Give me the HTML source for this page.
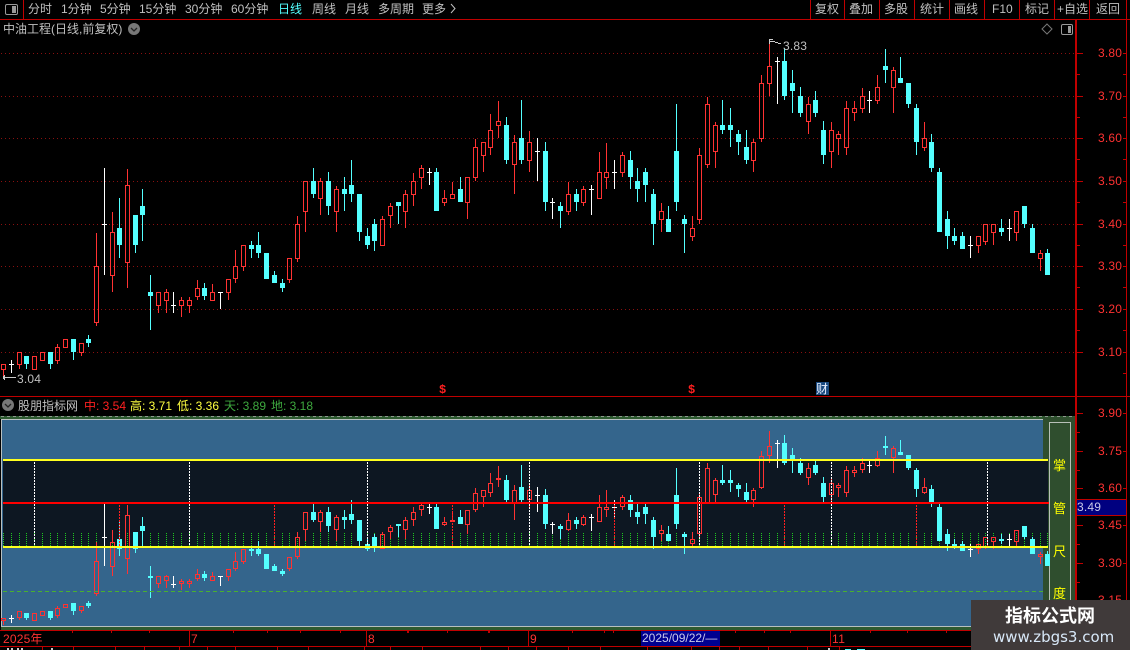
<!DOCTYPE html>
<html><head><meta charset="utf-8">
<style>
html,body{margin:0;padding:0;background:#000;width:1130px;height:650px;overflow:hidden}
#r{position:relative;width:1130px;height:650px;overflow:hidden;background:#000;font-family:"Liberation Sans","WenQuanYi Zen Hei","Noto Sans CJK SC",sans-serif;font-size:12px;color:#c0c0c0}
#r div{position:absolute;white-space:nowrap;line-height:14px;height:14px}
svg{position:absolute;left:0;top:0}
.a{color:#ff3232;font-size:12px;letter-spacing:.2px;left:1098px}
.y{color:#ffff00;font-size:13px;left:1053px}
</style></head><body><div id="r">
<svg id="s" width="1130" height="650" shape-rendering="crispEdges"></svg>

<div style="left:28px;top:2px">分时</div>
<div style="left:61px;top:2px">1分钟</div>
<div style="left:100px;top:2px">5分钟</div>
<div style="left:139px;top:2px">15分钟</div>
<div style="left:185px;top:2px">30分钟</div>
<div style="left:231px;top:2px">60分钟</div>
<div style="left:278px;top:2px;color:#54ffff">日线</div>
<div style="left:312px;top:2px">周线</div>
<div style="left:345px;top:2px">月线</div>
<div style="left:378px;top:2px">多周期</div>
<div style="left:422px;top:2px">更多</div>
<div style="left:815px;top:2px">复权</div>
<div style="left:849px;top:2px">叠加</div>
<div style="left:884px;top:2px">多股</div>
<div style="left:920px;top:2px">统计</div>
<div style="left:954px;top:2px">画线</div>
<div style="left:992px;top:2px">F10</div>
<div style="left:1025px;top:2px">标记</div>
<div style="left:1057px;top:2px">+自选</div>
<div style="left:1096px;top:2px">返回</div>
<div style="left:3px;top:22px">中油工程(日线,前复权)</div>

<div class="a" style="top:46px">3.80</div>
<div class="a" style="top:89px">3.70</div>
<div class="a" style="top:131px">3.60</div>
<div class="a" style="top:174px">3.50</div>
<div class="a" style="top:217px">3.40</div>
<div class="a" style="top:259px">3.30</div>
<div class="a" style="top:302px">3.20</div>
<div class="a" style="top:345px">3.10</div>
<div class="a" style="top:406px">3.90</div>
<div class="a" style="top:444px">3.75</div>
<div class="a" style="top:481px">3.60</div>
<div class="a" style="top:518px">3.45</div>
<div class="a" style="top:556px">3.30</div>
<div class="a" style="top:593px">3.15</div>
<div style="left:1077px;top:500px;color:#c8c8e8;letter-spacing:.2px">3.49</div>

<div style="left:783px;top:39px;letter-spacing:.2px">3.83</div>
<div style="left:17px;top:372px;letter-spacing:.2px">3.04</div>

<div style="left:439px;top:383px;color:#ff2020;font-family:'Liberation Mono',monospace;font-weight:bold;font-size:12px">$</div>
<div style="left:688px;top:383px;color:#ff2020;font-family:'Liberation Mono',monospace;font-weight:bold;font-size:12px">$</div>
<div style="left:816px;top:382px;color:#e8f0ff;font-size:12px">财</div>

<div style="left:18px;top:399px">股朋指标网</div>
<div style="left:84px;top:399px;color:#ff2020">中: 3.54</div>
<div style="left:130px;top:399px;color:#ffff40">高: 3.71</div>
<div style="left:177px;top:399px;color:#ffff40">低: 3.36</div>
<div style="left:224px;top:399px;color:#3ea83e">天: 3.89</div>
<div style="left:271px;top:399px;color:#3ea83e">地: 3.18</div>

<div class="y" style="top:459px">掌</div>
<div class="y" style="top:502px">管</div>
<div class="y" style="top:545px">尺</div>
<div class="y" style="top:587px">度</div>

<div style="left:3px;top:632px;color:#ff3232;letter-spacing:.2px">2025年</div>
<div style="left:191px;top:632px;color:#ff3232">7</div>
<div style="left:368px;top:632px;color:#ff3232">8</div>
<div style="left:530px;top:632px;color:#ff3232">9</div>
<div style="left:832px;top:632px;color:#ff3232;letter-spacing:.5px">11</div>
<div style="left:641px;top:631px;width:79px;height:15px;background:#000090;color:#c8c8e8;text-align:left;padding-left:1px;box-sizing:border-box">2025/09/22/—</div>

<div style="left:971px;top:600px;width:159px;height:50px;background:#403a3a"></div>
<div style="left:1005px;top:605px;height:20px;line-height:20px;font-family:'Noto Sans CJK SC',sans-serif;font-weight:bold;font-size:18px;color:#fff">指标公式网</div>
<div style="left:993px;top:628px;height:18px;line-height:18px;font-family:'DejaVu Sans',sans-serif;font-size:15px;color:#d8e8f8;letter-spacing:0">www.zbgs3.com</div>
</div>
<script>
var D=[[150,[
[0,643,643,659,680],[2,630,643,643,668],[0,607,607,644,656],[1,618,618,642,656],[0,619,619,659,659],[0,607,607,632,632],[1,606,606,642,656],[0,583,592,632,641],[0,568,568,593,593],[1,567,567,606,629],[0,580,580,608,617],[1,555,567,579,590],[0,250,349,518,527],[2,54,223,223,375],[0,186,247,377,425],[1,144,234,285,323],[0,57,106,338,413],[1,195,195,285,308],[1,117,168,194,272],[1,375,426,438,539],[0,427,427,467,488],[0,418,427,452,488],[2,426,466,466,488],[0,442,451,467,500],[0,442,451,467,488],[0,390,415,440,449],[1,399,414,438,449],[0,402,427,452,452],[2,427,427,427,476],[0,388,388,428,449],[0,300,349,388,398],[0,286,286,350,362],[1,273,285,297,323],[1,246,285,309,323],[1,309,309,387,387],[1,363,375,399,399],[1,387,399,414,425],[0,325,325,389,398],[0,198,223,326,335]]],
[90,[
[0,273,273,365,425],[1,234,273,312,323],[0,264,273,326,375],[1,246,273,348,375],[0,288,297,365,425],[1,261,297,312,362],[1,210,285,312,335],[1,312,312,426,453],[1,414,438,465,477],[1,387,402,453,483],[0,378,388,467,467],[0,339,349,377,413],[1,336,336,348,402],[0,300,313,365,413],[0,249,274,314,347],[0,225,235,263,296],[2,234,246,246,285],[1,234,246,363,363],[0,300,325,338,347],[0,276,313,326,326],[1,261,297,336,336],[0,262,262,338,387],[0,147,172,263,273],[0,157,157,197,245],[0,72,121,173,194],[0,33,94,107,144],[1,81,105,210,221],[0,135,157,224,312],[1,30,144,210,221],[0,123,157,212,245],[2,144,184,184,273],[1,156,183,336,362],[2,324,337,337,387],[1,336,348,363,413],[0,276,313,365,374],[1,297,312,336,362]]],
[30,[
[0,468,478,518,527],[2,465,478,478,554],[0,366,427,506,506],[0,339,427,443,477],[2,390,427,427,477],[0,366,376,428,440],[1,363,390,441,477],[1,414,453,477,516],[1,414,426,465,516],[1,477,492,582,645],[0,519,544,569,606],[1,528,567,606,606],[1,222,363,516,543],[1,555,567,582,669],[0,558,595,620,632],[0,354,376,569,582],[0,201,223,404,413],[0,276,286,365,413],[1,210,285,300,312],[1,234,285,300,351],[1,300,312,336,375],[1,300,351,390,402],[0,327,337,392,425],[0,135,160,326,335],[0,30,109,161,198],[2,81,94,94,222],[1,54,93,198,210],[1,120,159,183,249],[1,171,198,249,261],[0,201,223,275,312],[1,183,210,249,261],[1,273,300,375,402],[0,276,301,365,413],[0,303,313,326,375],[0,213,235,353,375],[0,213,235,250,273],
[0,174,199,236,249],[2,183,211,211,249],[0,135,172,212,221],[1,57,108,120,159],[0,111,121,173,249],[1,81,144,159,159],[1,159,159,222,234],[1,222,234,336,375],[0,276,325,353,362],[1,312,336,414,426],[1,414,426,606,606],[1,543,567,618,657],[1,594,618,633,645],[1,606,618,657,657],[2,618,646,646,684],[0,619,619,647,669],[0,583,583,635,645],[0,583,583,608,645],[1,567,594,606,618],[2,567,595,595,633],[0,544,544,608,633],[1,528,528,582,594],[1,582,594,669,669],[0,660,670,686,723],[1,657,669,735,735]]]];
var C=[];D.forEach(function(g){g[1].forEach(function(c){C.push([c[0],g[0]+c[1]/3,g[0]+c[2]/3,g[0]+c[3]/3,g[0]+c[4]/3])})});
var o=[];
function R(x,y,w,h,f){o.push('<rect x="'+x+'" y="'+y+'" width="'+w+'" height="'+h+'" fill="'+f+'"/>')}
function DV(x,a,b,f,on,off){for(var y=a;y<b;y+=on+off)R(x,y,1,on,f)}
function DH(y,a,b,f,on,off,h){for(var x=a;x<b;x+=on+off)R(x,y,on,h||1,f)}
var RED='#c00000',CR='#ff3232',CC='#54ffff';
/* header */
R(0,19,1130,1,RED);R(23,0,1,19,RED);
[810,844,879,914,949,984,1019,1054,1089,1126].forEach(function(x){R(x,0,1,19,RED)});
R(1075,20,2,630,RED);R(1126,20,1,630,RED);
R(0,396,1130,1,RED);
/* grid */
[53,96,138,181,224,266,309,352].forEach(function(y){DH(y,1,1075,'#8a1010',1,3)});
/* axis ticks upper */
for(var i=0;i<8;i++){var yy=[53,96,138,181,224,266,309,352][i];R(1077,yy,6,1,RED);if(i<7)R(1077,yy+21,3,1,RED);R(1123,yy,3,1,RED);R(1123,yy+21,3,1,RED)}
/* lower panel */
R(0,416,1075,1,'#2e5a30');DH(416,1,1075,'#909890',3,3);
R(0,417,1075,2,'#2e5a30');
R(1043,417,32,213,'#2f4e2e');
R(1,419,1042,1,'#b8c0c0');
R(1,419,1,208,'#b8c0c0');
R(2,420,1041,206,'#34658c');
R(1,626,1042,1,'#b8c0c0');
R(1,627,1074,3,'#2e5a30');
R(3,461,1045,86,'#0d1722');
/* inner scale box */
o.push('<rect x="1049.5" y="422.5" width="21" height="210" fill="none" stroke="#b8c0b8"/>');
/* lower axis ticks */
[413,451,488,525,563,600].forEach(function(y){R(1077,y,6,1,RED);R(1077,y+19,3,1,RED);R(1123,y,3,1,RED)});
/* green dots */
function X(i){return Math.round(3.3+7.733*i)}
var wc=[34,189,367,529,699,831,987],rc=[119,274,452,614,784,916];
for(i=0;i<C.length;i++){var x=X(i);DV(x,533,546,'#20c820',1,1)}
/* candles */
function cand(c,x,f){var t=c[0],h=Math.round(f(c[1])),a=Math.round(f(c[2])),b=Math.round(f(c[3])),l=Math.round(f(c[4]));
 if(t==2){R(x,h,1,Math.max(l-h,1),'#fff');R(x-2,a,5,1,'#fff');return}
 if(t==1){R(x,h,1,Math.max(l-h,1),CC);R(x-2,a,5,Math.max(b-a,1),CC);return}
 if(a>h)R(x,h,1,a-h,CR);if(l>b)R(x,b,1,l-b,CR);
 o.push('<rect x="'+(x-1.5)+'" y="'+(a+.5)+'" width="4" height="'+Math.max(b-a-1,1)+'" fill="none" stroke="'+CR+'"/>');
}
function U(y){return y}function L(y){return 438.2+(y-53.3)*.578}
C.forEach(function(c,i){cand(c,X(i),U)});
C.forEach(function(c,i){cand(c,X(i),L)});
/* dotted columns */
wc.forEach(function(x){DV(x,462,547,'#fff',2,1)});
rc.forEach(function(x){DV(x,505,546,'#ff2020',2,1)});
/* level lines */
R(3,459,1045,2,'#ffff20');R(3,502,1046,2,'#ff0000');R(3,546,1045,2,'#ffff20');
DH(591,3,1043,'#49b030',4,3);
/* time axis */
R(0,630,1075,1,RED);R(0,646,1130,1,RED);
[189,366,528,830].forEach(function(x){R(x,631,1,15,RED)});
[72,111,149,233,267,300,340,408,489].forEach(function(x){R(x,631,1,2,RED)});
[407,447,488,572,604,613,735,764,790,870,907,946].forEach(function(x){R(x,631,1,2,RED)});
[42,73,115,144,179,207,235,277,308,364,390,422,480,508,536,568,600,647,691,719,739,768,807,839].forEach(function(x){R(x,647,1,3,RED)});
[7,11,17,21,51,828].forEach(function(x){R(x,648,2,2,'#ccc')});
R(845,649,6,1,CC);R(857,649,8,1,CC);
/* annotations */
R(769,40,1,14,CR);
R(769,39,4,1,'#ccc');R(769,39,1,5,'#ccc');R(770,41,2,1,'#ccc');R(772,41,3,1,'#ccc');R(775,42,3,1,'#ccc');R(778,43,3,1,'#ccc');
R(3,377,13,1,'#ccc');R(3,376,1,3,'#ccc');R(4,375,1,2,'#ccc');R(4,378,1,2,'#ccc');
/* marker bg */
o.push('<rect x="816" y="382" width="13" height="13" fill="#1a4a80"/>');
/* value box */
R(1077,499,49,16,'#000080');R(1077,499,49,1,RED);R(1077,515,49,1,RED);
var s=document.getElementById('s');
var icons=
'<g shape-rendering="auto">'+
'<rect x="5.5" y="4.500" width="12" height="10" rx="1.5" fill="none" stroke="#999"/><rect x="12" y="6" width="4" height="7" fill="#999"/>'+
'<rect x="1061.5" y="24.5" width="11" height="10" rx="1.5" fill="none" stroke="#999"/><rect x="1068" y="26" width="3" height="7" fill="#999"/>'+
'<path d="M1047 24l5 5-5 5-5-5z" fill="none" stroke="#777"/>'+
'<circle cx="134" cy="29" r="6" fill="#777"/><path d="M131 28l3 3 3-3" fill="none" stroke="#222" stroke-width="1.3"/>'+
'<circle cx="8" cy="405" r="6" fill="#777"/><path d="M5 404l3 3 3-3" fill="none" stroke="#222" stroke-width="1.3"/>'+
'<path d="M451 4l4 4.500-4 4.500" fill="none" stroke="#c0c0c0"/>'+
'</g>';
s.innerHTML=o.join('')+icons;
</script>
</body></html>
